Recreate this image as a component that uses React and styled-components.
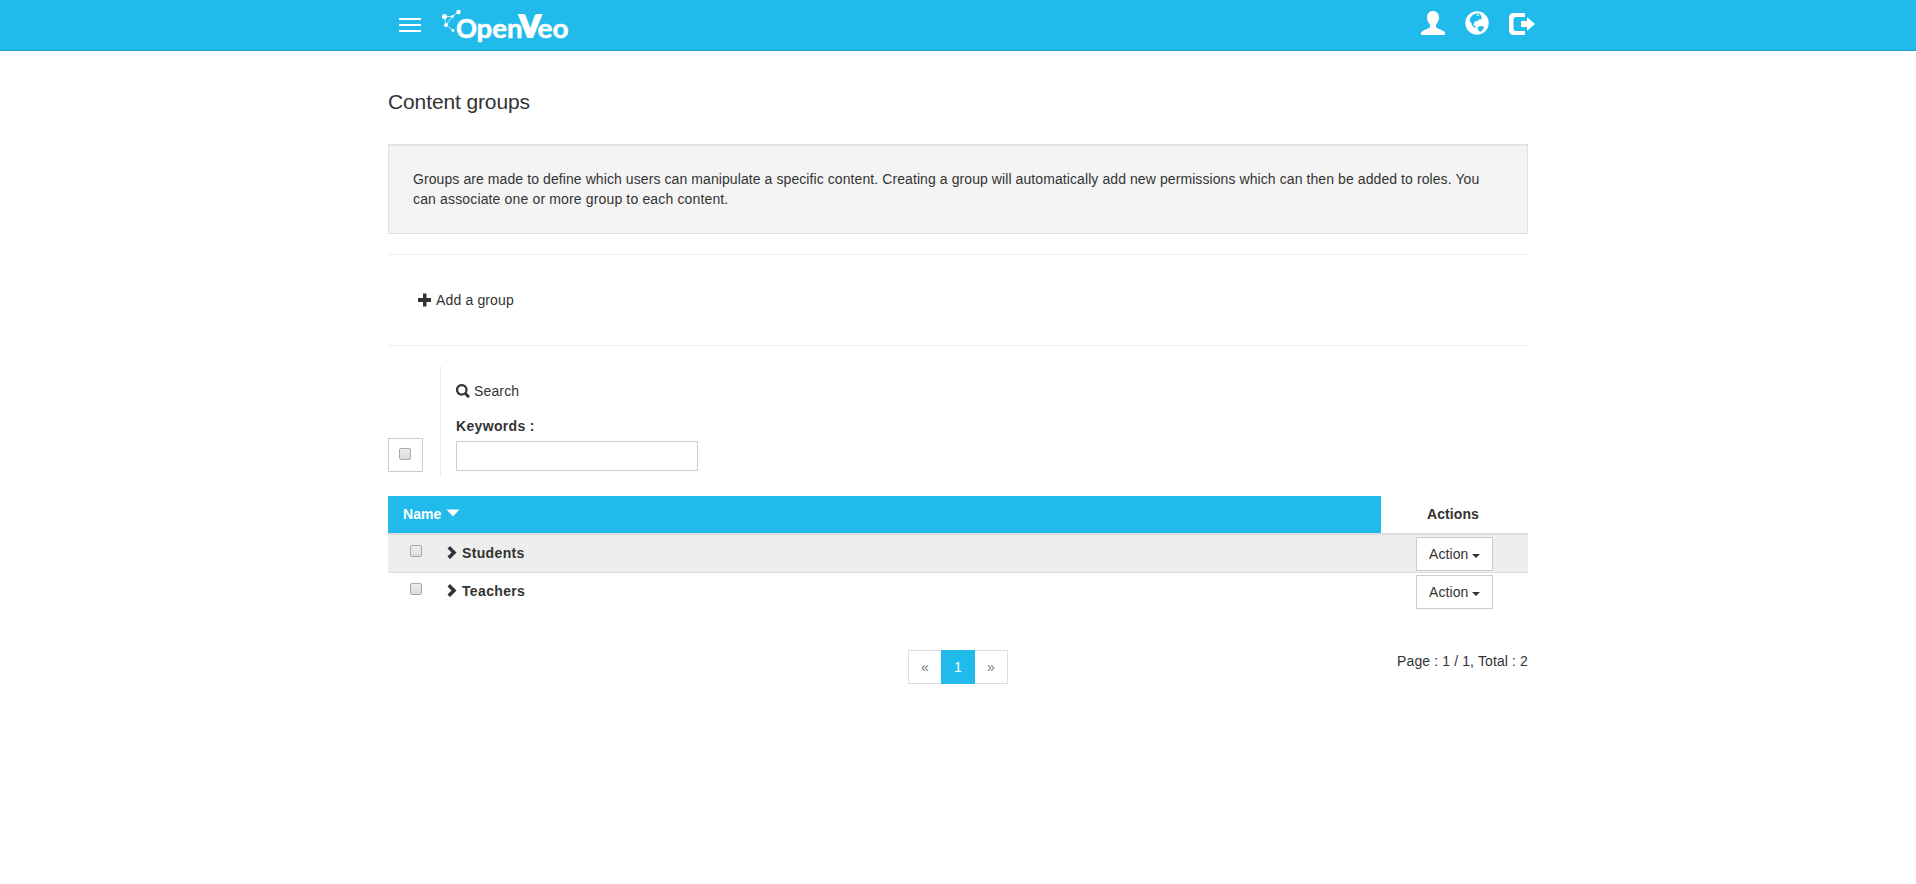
import React from "react";
import styled, { createGlobalStyle } from "styled-components";

const Global = createGlobalStyle`
  *, *::before, *::after { box-sizing: border-box; }
  body { margin: 0; background: #fff; color: #333; font: 14px/20px "Liberation Sans", Arial, sans-serif; letter-spacing: 0.085px; }
`;

const Navbar = styled.header`
  height: 51px;
  background: #20bbeb;
  border-bottom: 1px solid #1ba6d2;
`;
const NavInner = styled.div`
  width: 1140px;
  height: 50px;
  margin: 0 auto;
  display: flex;
  justify-content: space-between;
`;
const NavLeft = styled.div`
  display: flex;
  align-items: flex-start;
  padding-left: 11px;
`;
const Burger = styled.button`
  display: flex;
  flex-direction: column;
  gap: 4px;
  width: 22px;
  margin: 18px 20px 0 0;
  padding: 0;
  border: 0;
  background: none;
  span { height: 2px; background: #fff; }
`;
const Logo = styled.svg`
  display: block;
  width: 134px;
  height: 50px;
  letter-spacing: 0;
`;
const NavRight = styled.nav`
  display: flex;
  gap: 20px;
  padding-top: 11px;
  margin-right: -5px;
  svg { display: block; width: 24px; height: 24px; fill: #fff; overflow: visible; }
`;
const Page = styled.main`
  width: 1140px;
  margin: 0 auto;
`;
const Title = styled.h1`
  margin: 0;
  padding: 39px 0 30px;
  font-size: 21px;
  line-height: 24px;
  font-weight: 400;
  letter-spacing: -0.12px;
`;
const Well = styled.p`
  margin: 0;
  height: 90px;
  padding: 24px;
  background: #f4f4f4;
  border: 1px solid #e1e1e1;
  box-shadow: inset 0 1px 1px rgba(0, 0, 0, 0.05);
`;
const Line = styled.span`
  display: block;
  white-space: nowrap;
  letter-spacing: ${(p) => p.$ls || "inherit"};
`;
const Toolbar = styled.section`
  display: flex;
  align-items: center;
  height: 92px;
  margin-top: 20px;
  padding-left: 30px;
  border: solid #ededed;
  border-width: 1px 0;
`;
const IconText = styled.span`
  display: flex;
  align-items: center;
  gap: 4px;
  letter-spacing: 0.15px;
  svg { width: 14px; height: 14px; fill: #333; margin-top: -1px; }
`;
const Filters = styled.section`
  display: flex;
  align-items: flex-end;
  height: 110px;
  margin: 20px 0;
`;
const SelectAll = styled.label`
  display: flex;
  justify-content: center;
  width: 35px;
  height: 34px;
  margin: 0 17px 4px 0;
  padding: 9px 1px 0 0;
  border: 1px solid #ccc;
`;
const Checkbox = styled.input`
  appearance: none;
  width: 12px;
  height: 12px;
  margin: 0;
  border: 1px solid #a9a9a9;
  border-radius: 2px;
  background: linear-gradient(#ededed, #dcdcdc);
`;
const SearchPane = styled.div`
  height: 110px;
  border-left: 1px solid #ededed;
  padding: 15px 0 0 15px;
`;
const Label = styled.label`
  display: block;
  margin: 15px 0 5px;
  font-weight: 700;
  letter-spacing: 0.33px;
`;
const TextInput = styled.input`
  display: block;
  width: 242px;
  height: 30px;
  border: 1px solid #ccc;
  padding: 5px 10px;
`;
const Table = styled.div`
  display: flex;
  flex-direction: column;
`;
const HeadRow = styled.div`
  display: flex;
  height: 39px;
  border-bottom: 2px solid #ddd;
  font-weight: 700;
  line-height: 36px;
`;
const NameHead = styled.div`
  width: 993px;
  padding-left: 15px;
  background: #20bbeb;
  color: #fff;
  display: flex;
  gap: 5px;
  svg { width: 14px; height: 8px; fill: #fff; margin-top: 13px; }
`;
const ActionsHead = styled.div`
  flex: 1;
  text-align: center;
  padding-right: 3px;
`;
const Row = styled.div`
  display: flex;
  height: 38px;
  background: ${(p) => (p.$shade ? "#eee" : "#fff")};
  border-bottom: 1px solid ${(p) => (p.$shade ? "#ddd" : "transparent")};
`;
const CheckCell = styled.div`
  width: 59px;
  padding: 10px 0 0 22px;
  line-height: 0;
`;
const NameCell = styled.div`
  flex: 1;
  display: flex;
  gap: 5px;
  padding-top: 8px;
  font-weight: 700;
  line-height: 21px;
  letter-spacing: 0.35px;
  svg { width: 10px; height: 13px; fill: #333; margin-top: 3px; }
`;
const ActionButton = styled.button`
  display: flex;
  align-items: center;
  gap: 4px;
  width: 77px;
  height: 34px;
  margin: 2px 35px 0 0;
  padding: 0 0 0 12px;
  font: inherit;
  letter-spacing: inherit;
  color: #333;
  background: #fff;
  border: 1px solid #ccc;
`;
const Caret = styled.i`
  border: 4px solid transparent;
  border-top-color: #333;
  border-bottom: 0;
  margin-top: 3px;
`;
const Footer = styled.footer`
  display: grid;
  grid-template-columns: 1fr auto 1fr;
  margin-top: 39px;
`;
const Pager = styled.div`
  grid-column: 2;
  display: flex;
  width: 100px;
  height: 34px;
`;
const PageItem = styled.span`
  flex: 1;
  text-align: center;
  line-height: 32px;
  border: 1px solid ${(p) => (p.$on ? "#20bbeb" : "#ddd")};
  border-left-width: ${(p) => (p.$last ? 0 : "1px")};
  border-right-width: ${(p) => (p.$first ? 0 : "1px")};
  background: ${(p) => (p.$on ? "#20bbeb" : "#fff")};
  color: ${(p) => (p.$on ? "#fff" : "#777")};
`;
const Total = styled.div`
  text-align: right;
  padding-top: 1px;
  letter-spacing: 0.12px;
`;

const items = ["Students", "Teachers"];

export default function App() {
  return (
    <>
      <Global />
      <Navbar>
        <NavInner>
          <NavLeft>
            <Burger aria-label="Menu"><span /><span /><span /></Burger>
            <Logo viewBox="0 0 134 50" aria-label="OpenVeo">
              <g stroke="#fff" strokeWidth="0.7" fill="none">
                <path d="M3.5 16.5L11.5 16.5L17.5 12M11.5 16.5L5 25L3.5 16.5M5 25L12 30.5" />
              </g>
              <g fill="#fff">
                <circle cx="3.5" cy="16.5" r="2.6" />
                <circle cx="17.5" cy="12" r="2.2" />
                <circle cx="11.5" cy="16.5" r="1.4" />
                <circle cx="5" cy="25" r="2" />
                <circle cx="12" cy="30.5" r="1.4" />
              </g>
              <g fill="#fff" stroke="#fff" strokeWidth="0.5" fontFamily="Lato, sans-serif" fontWeight="700">
                <text x="15" y="38.2" fontSize="26" textLength="21" lengthAdjust="spacingAndGlyphs">O</text>
                <text x="35.500" y="37.9" fontSize="27" textLength="46" lengthAdjust="spacingAndGlyphs">pen</text>
                <text x="78.500" y="37" fontSize="31" fontWeight="900" strokeWidth="2.200" textLength="21" lengthAdjust="spacingAndGlyphs">V</text>
                <text x="96.500" y="37.9" fontSize="27" textLength="31" lengthAdjust="spacingAndGlyphs">eo</text>
              </g>
            </Logo>
          </NavLeft>
          <NavRight>
            <svg viewBox="0 0 24 24"><path d="M12 0C8.500 0 6 2.500 6 6.500C6 9.500 7.500 12 9 13.500V16.500L1.500 20Q0 21 0 22V24H24V22Q24 21 22.500 20L15 16.500V13.500C16.500 12 18 9.500 18 6.500C18 2.500 15.500 0 12 0Z" /></svg>
            <svg viewBox="0 0 24 24"><path fillRule="evenodd" d="M12 0.300a11.700 11.700 0 1 0 0 23.400a11.700 11.700 0 0 0 0-23.400ZM7.500 4L11 2.500L15 2.500L16 5L17 8L14 8.500L12 10.500L10 10L9.500 12L8 13.500L11 16L10 17L7 14.500L6.500 12L4.500 10L5.500 6.500ZM12.500 16.500L15 15L19 15.500L18 18.500L15.500 21L13.500 19.500ZM11 4L13 5L14.500 4L13 3.200Z" /></svg>
            <svg viewBox="0 0 24 24"><path d="M16 2H5Q0 2 0 7V19Q0 24 5 24H16V20H7Q4.500 20 4.500 17.500V8.500Q4.500 6 7 6H16ZM18 6L26 13L18 20V16H12V10H18Z" /></svg>
          </NavRight>
        </NavInner>
      </Navbar>
      <Page>
        <Title>Content groups</Title>
        <Well>
          <Line>Groups are made to define which users can manipulate a specific content. Creating a group will automatically add new permissions which can then be added to roles. You</Line>
          <Line $ls="0.15px">can associate one or more group to each content.</Line>
        </Well>
        <Toolbar>
          <IconText>
            <svg viewBox="0 0 14 14"><path d="M5 0.500H8.500V5H13V9H8.500V13.500H5V9H0V5H5Z" /></svg>
            Add a group
          </IconText>
        </Toolbar>
        <Filters>
          <SelectAll><Checkbox type="checkbox" /></SelectAll>
          <SearchPane>
            <IconText>
              <svg viewBox="0 0 14 14"><path fillRule="evenodd" d="M5.800 0a5.800 5.800 0 1 0 2.800 10.800L11.800 14Q13.200 14 13.800 12L10.700 8.800A5.800 5.800 0 0 0 5.800 0ZM5.800 2.200a3.600 3.600 0 1 1 0 7.200a3.600 3.600 0 0 1 0-7.200Z" /></svg>
              Search
            </IconText>
            <Label>Keywords :</Label>
            <TextInput />
          </SearchPane>
        </Filters>
        <Table>
          <HeadRow>
            <NameHead>Name<svg viewBox="0 0 14 8"><path d="M0.500 0.500H13.500L7 7.500Z" /></svg></NameHead>
            <ActionsHead>Actions</ActionsHead>
          </HeadRow>
          {items.map((n, i) => (
            <Row key={n} $shade={i === 0}>
              <CheckCell><Checkbox type="checkbox" /></CheckCell>
              <NameCell><svg viewBox="0 0 10 13"><path d="M3 0L9.500 6.500L3 13L0.500 10.500L4.500 6.500L0.500 2.500Z" /></svg>{n}</NameCell>
              <ActionButton>Action <Caret /></ActionButton>
            </Row>
          ))}
        </Table>
        <Footer>
          <Pager>
            <PageItem $first>«</PageItem>
            <PageItem $on>1</PageItem>
            <PageItem $last>»</PageItem>
          </Pager>
          <Total>Page : 1 / 1, Total : 2</Total>
        </Footer>
      </Page>
    </>
  );
}
